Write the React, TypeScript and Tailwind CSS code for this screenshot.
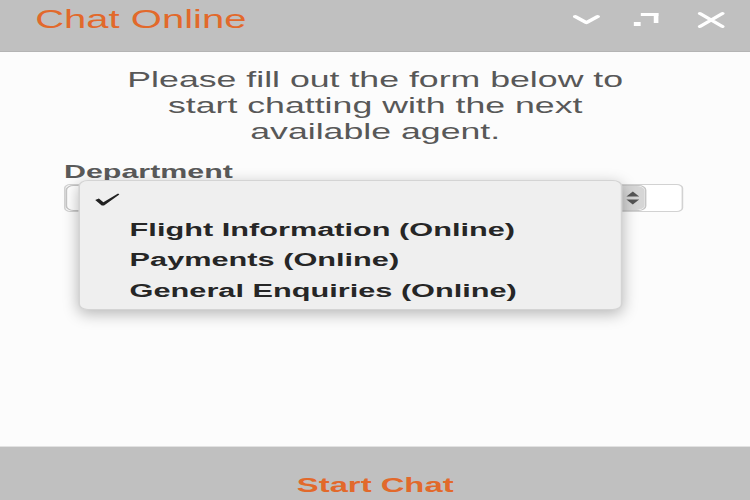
const departments = [
  "Flight Information (Online)",
  "Payments (Online)",
  "General Enquiries (Online)",
];

function HeaderIcons() {
  return (
    <div className="ml-auto mt-[7px] flex items-start gap-[21px] text-white">
      <svg width="17" height="16" viewBox="0 0 17 16" fill="none">
        <path d="M1.6 4.6 L8.5 10.6 L15.4 4.6" stroke="currentColor" strokeWidth="3" strokeLinecap="round" strokeLinejoin="round" />
      </svg>
      <svg width="16" height="16" viewBox="0 0 16 16" fill="currentColor">
        <rect x="4.5" y="1" width="11" height="3" />
        <rect x="12.6" y="1" width="2.9" height="10" />
        <rect x="0" y="10" width="4.4" height="4" />
      </svg>
      <svg width="17" height="16" viewBox="0 0 17 16" fill="none" className="ml-[3px]">
        <path d="M1.5 1.5 L15.5 14.5 M15.5 1.5 L1.5 14.5" stroke="currentColor" strokeWidth="2.8" strokeLinecap="round" />
      </svg>
    </div>
  );
}

function DepartmentSelect() {
  return (
    <div className="relative mt-px h-[28px] w-[387px] rounded-[4px] border border-[#d2d2d2] bg-white">
      <div className="flex h-full w-[363px] overflow-hidden rounded-[5px] border border-[#c6c6c6] bg-white">
        <div className="flex-1" />
        <div className="flex w-[16px] flex-col items-center justify-center gap-[2px] rounded-r-[5px] bg-[#d6d6d6] text-[#555]">
          <svg width="9" height="6" viewBox="0 0 9 6" fill="currentColor">
            <path d="M0.5 5.5 L4.5 0.5 L8.5 5.5 Z" />
          </svg>
          <svg width="9" height="6" viewBox="0 0 9 6" fill="currentColor">
            <path d="M0.5 0.5 L4.5 5.5 L8.5 0.5 Z" />
          </svg>
        </div>
      </div>

      {/* open native-looking menu */}
      <div className="absolute -top-[5px] left-[8px] w-[340px] rounded-[6px] border border-[#d4d4d4] bg-[#efefef] pb-[3px] pt-[3.5px] shadow-[0_4px_12px_rgba(0,0,0,0.28)]">
        <div className="flex h-[30.5px] items-center pl-[9px]">
          <svg width="16" height="13" viewBox="0 0 16 13" fill="#222">
            <path d="M0.5 7 L2.8 5.6 L5.6 9.2 L14.8 0.6 L15.6 1.4 L6 12.4 L4.6 12.4 Z" />
          </svg>
        </div>
        {departments.map((d) => (
          <div
            key={d}
            className="h-[30.5px] pl-[31px] text-[19.2px] font-bold leading-[30.5px] text-[#262626]"
          >
            {d}
          </div>
        ))}
      </div>
    </div>
  );
}

export default function App() {
  return (
    <div className="h-[500px] w-[469px] origin-top-left scale-x-[1.6] overflow-hidden font-['Liberation_Sans',Arial,sans-serif]">
      <div className="flex h-full flex-col bg-[#fcfcfc]">
        <header className="flex h-[52px] shrink-0 items-start border-b border-[#b4b4b4] bg-[#c0c0c0] pl-[22px] pr-[16px] pt-[5px]">
          <h1 className="text-[25px] leading-[28px] text-[#e2692b]">Chat Online</h1>
          <HeaderIcons />
        </header>

        <main className="h-[395px] shrink-0 border-b border-[#e2e2e2] pt-[15px]">
          <p className="mx-auto w-[330px] text-center text-[22.3px] leading-[26px] text-[#585858]">
            Please fill out the form below to start chatting with the next available agent.
          </p>
          <div className="mt-[15.5px] px-[40px]">
            <label className="block text-[19px] font-bold leading-[22px] text-[#5a5a5a]">
              Department
            </label>
            <DepartmentSelect />
          </div>
        </main>

        <footer className="h-[70px] shrink-0 bg-[#c0c0c0] pt-[25.5px] text-center">
          <button className="text-[20.5px] font-bold leading-[24px] text-[#e2692b]">
            Start Chat
          </button>
        </footer>
      </div>
    </div>
  );
}
